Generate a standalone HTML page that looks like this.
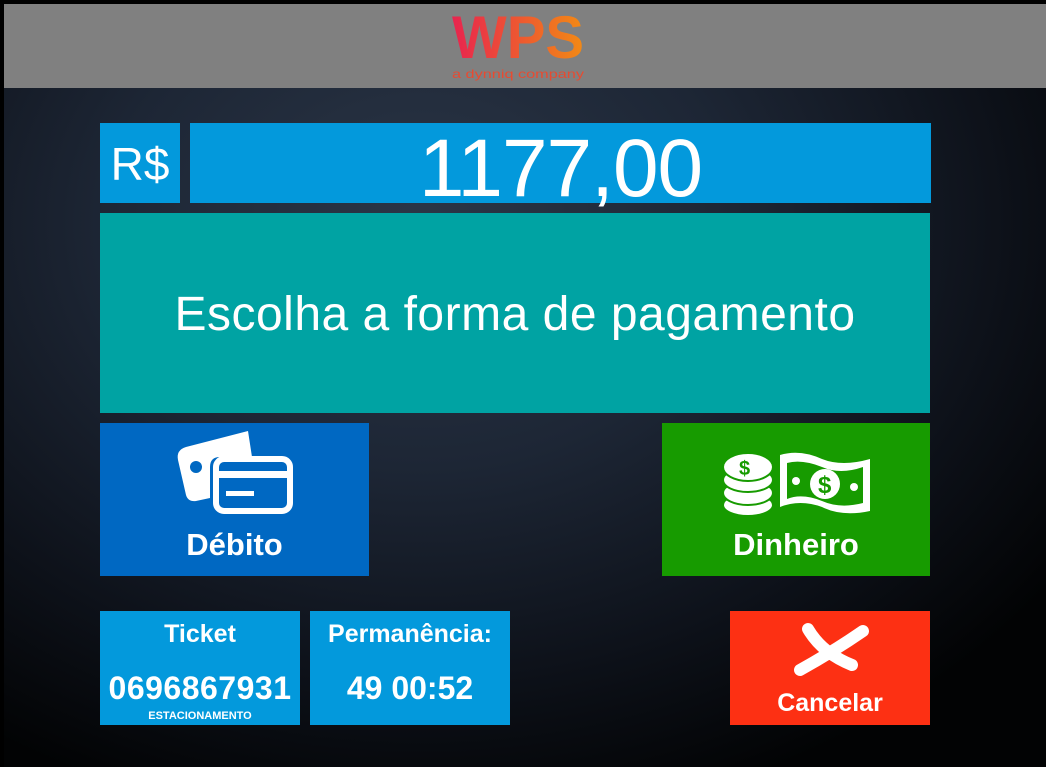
<!DOCTYPE html>
<html><head><meta charset="utf-8"><style>
*{margin:0;padding:0;box-sizing:border-box}
body{width:1046px;height:767px;overflow:hidden;background:#000;font-family:"Liberation Sans",Arial,sans-serif;position:relative;color:#fff}
.bg{position:absolute;left:4px;top:88px;width:1042px;height:679px;background:radial-gradient(ellipse 75% 90% at 40% 20%,#2b3647 0%,#1d2635 40%,#0d1119 75%,#020304 100%)}
.hdr{position:absolute;left:4px;top:4px;width:1042px;height:84px;background:#808080}
.b{position:absolute;text-align:center}
.t{position:absolute;left:0;right:0;text-align:center;white-space:nowrap}
</style></head><body>
<div class="bg"></div>
<div class="hdr"></div>
<svg style="position:absolute;left:450px;top:6px" width="140" height="78" viewBox="0 0 140 78">
<defs><linearGradient id="g" x1="0" x2="1"><stop offset="0" stop-color="#e8244f"/><stop offset="1" stop-color="#f28a14"/></linearGradient></defs>
<text x="2" y="52" font-family="Liberation Sans" font-weight="bold" font-size="60" fill="url(#g)" textLength="132" lengthAdjust="spacingAndGlyphs">WPS</text>
<text x="2" y="72" font-family="Liberation Sans" font-size="12" fill="#e84a30" textLength="132" lengthAdjust="spacingAndGlyphs">a dynniq company</text>
</svg>
<div class="b" style="left:100px;top:123px;width:80px;height:80px;background:#0399dc"><div class="t" style="top:14px;font-size:46px">R$</div></div>
<div class="b" style="left:190px;top:123px;width:741px;height:80px;background:#0399dc"><div class="t" style="top:-1px;font-size:82px;letter-spacing:-1px">1177,00</div></div>
<div class="b" style="left:100px;top:213px;width:830px;height:200px;background:#00a3a3"><div class="t" style="top:74px;font-size:48px;letter-spacing:0.5px">Escolha a forma de pagamento</div></div>
<div class="b" style="left:100px;top:423px;width:269px;height:153px;background:#0068c2">
<svg style="position:absolute;left:74px;top:6px" width="122" height="86" viewBox="0 0 122 86">
<path d="M74 2 L12 18 Q2 21 4 31 L12 66 Q14 73 22 72 L36 69 L36 38 Q36 28 46 28 L78 28 Z" fill="#fff"/>
<circle cx="22" cy="38" r="6" fill="#0068c2"/>
<rect x="42" y="30" width="74" height="52" rx="8" fill="none" stroke="#fff" stroke-width="6"/>
<rect x="44" y="42" width="70" height="7" fill="#fff"/>
<rect x="52" y="62" width="28" height="5" fill="#fff"/>
</svg>
<div class="t" style="top:104px;font-weight:bold;font-size:31px">Débito</div></div>
<div class="b" style="left:662px;top:423px;width:268px;height:153px;background:#179b00">
<svg style="position:absolute;left:60px;top:28px" width="150" height="66" viewBox="0 0 150 66">
<g fill="#fff" stroke="#179b00" stroke-width="2"><ellipse cx="26" cy="54" rx="25" ry="11"/><ellipse cx="26" cy="42" rx="25" ry="12"/><ellipse cx="26" cy="29" rx="25" ry="12"/><ellipse cx="26" cy="16" rx="25" ry="14"/></g>
<text x="17" y="24" font-size="20" font-weight="bold" fill="#179b00" font-family="Liberation Sans">$</text>
<path d="M58 4 Q78 -2 100 8 Q120 16 148 8 L148 60 Q120 66 100 56 Q78 48 58 56 Z" fill="#fff"/>
<path d="M65 12 Q80 8 100 16 Q118 24 141 16 L141 52 Q118 58 100 50 Q80 42 65 48 Z" fill="#179b00"/>
<circle cx="103" cy="33" r="15" fill="#fff"/><text x="96" y="42" font-size="24" font-weight="bold" fill="#179b00" font-family="Liberation Sans">$</text>
<circle cx="74" cy="30" r="4" fill="#fff"/><circle cx="132" cy="36" r="4" fill="#fff"/>
</svg>
<div class="t" style="top:104px;font-weight:bold;font-size:31px">Dinheiro</div></div>
<div class="b" style="left:100px;top:611px;width:200px;height:114px;background:#0399dc;font-weight:bold">
<div class="t" style="top:9px;font-size:25px">Ticket</div>
<div class="t" style="top:59px;font-size:32px;letter-spacing:0.5px">0696867931</div>
<div class="t" style="top:99px;font-size:11px">ESTACIONAMENTO</div></div>
<div class="b" style="left:310px;top:611px;width:200px;height:114px;background:#0399dc;font-weight:bold">
<div class="t" style="top:9px;font-size:25px">Permanência:</div>
<div class="t" style="top:59px;font-size:32px">49 00:52</div></div>
<div class="b" style="left:730px;top:611px;width:200px;height:114px;background:#fd3013">
<svg style="position:absolute;left:60px;top:8px" width="80" height="60" viewBox="0 0 80 60"><path d="M18 10 Q32 34 62 46 M73 12 Q44 32 10 51" stroke="#fff" stroke-width="12" stroke-linecap="round" fill="none"/></svg>
<div class="t" style="top:78px;font-weight:bold;font-size:25px">Cancelar</div></div>
</body></html>
